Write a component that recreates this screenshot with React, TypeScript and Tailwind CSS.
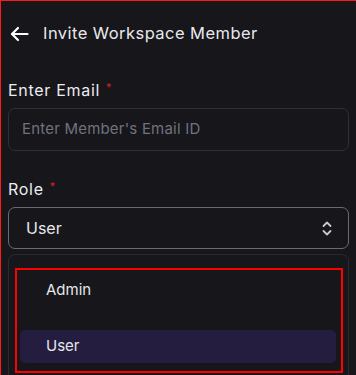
import React from "react";

export default function App() {
  return (
    <div
      className="w-[356px] h-[375px] overflow-hidden bg-[#16161b] border-t border-l border-[#ff1a1a] text-[#e6e6ea]"
      style={{ fontFamily: "Inter, 'Noto Sans', sans-serif" }}
    >
      <div className="flex items-center h-[65px] pl-[9px]">
        <svg width="19" height="16" viewBox="0 0 19 16" fill="none" stroke="#ffffff" strokeWidth="2.2" strokeLinecap="round" strokeLinejoin="round">
          <path d="M17.5 8H2" />
          <path d="M8 2L2 8l6 6" />
        </svg>
        <span className="ml-[14px] text-[16.5px] tracking-[0.45px] text-[#e8e8ec]">Invite Workspace Member</span>
      </div>
      <div className="px-[7px]">
        <div className="flex items-start h-[42px] pt-[14px]">
          <span className="text-[16px] leading-[20px] tracking-[0.7px] text-[#ececf0]">Enter Email</span>
          <span className="ml-[6px] text-[11px] leading-[14px] text-[#d4202a]">*</span>
        </div>
        <div className="h-[43px] rounded-[7px] border border-[#2f2f36] flex items-center pl-[13px]">
          <span className="text-[15px] tracking-[0.2px] text-[#72727c]">Enter Member's Email ID</span>
        </div>
        <div className="flex items-start h-[56px] pt-[28px]">
          <span className="text-[16px] leading-[20px] tracking-[0.7px] text-[#ececf0]">Role</span>
          <span className="ml-[6px] text-[11px] leading-[14px] text-[#d4202a]">*</span>
        </div>
        <div className="h-[42px] rounded-[7px] border border-[#6a6a72] flex items-center justify-between pl-[17px] pr-[16px]">
          <span className="text-[16px] text-[#e8e8ec]">User</span>
          <svg width="10" height="17" viewBox="0 0 10 17" fill="none" stroke="#c8c8cc" strokeWidth="1.8" strokeLinecap="round" strokeLinejoin="round">
            <path d="M1.5 6L5 2.5 8.5 6" />
            <path d="M1.5 11L5 14.5 8.5 11" />
          </svg>
        </div>
        <div className="mt-[5px] h-[140px] rounded-[7px] border border-[#2a2a31] pt-[13px] pl-[6px] pr-[5px]">
          <div className="h-[105px] border-2 border-[#ff0000] px-[2px]">
            <div className="h-[40px] flex items-center pl-[27px]">
              <span className="text-[15px] text-[#e6e6ea]">Admin</span>
            </div>
            <div className="mt-[20px] h-[33px] mr-[3px] ml-[1px] rounded-[5px] bg-[#251d40] flex items-center pl-[26px]">
              <span className="text-[15px] text-[#e6e6ea]">User</span>
            </div>
          </div>
        </div>
      </div>
    </div>
  );
}
